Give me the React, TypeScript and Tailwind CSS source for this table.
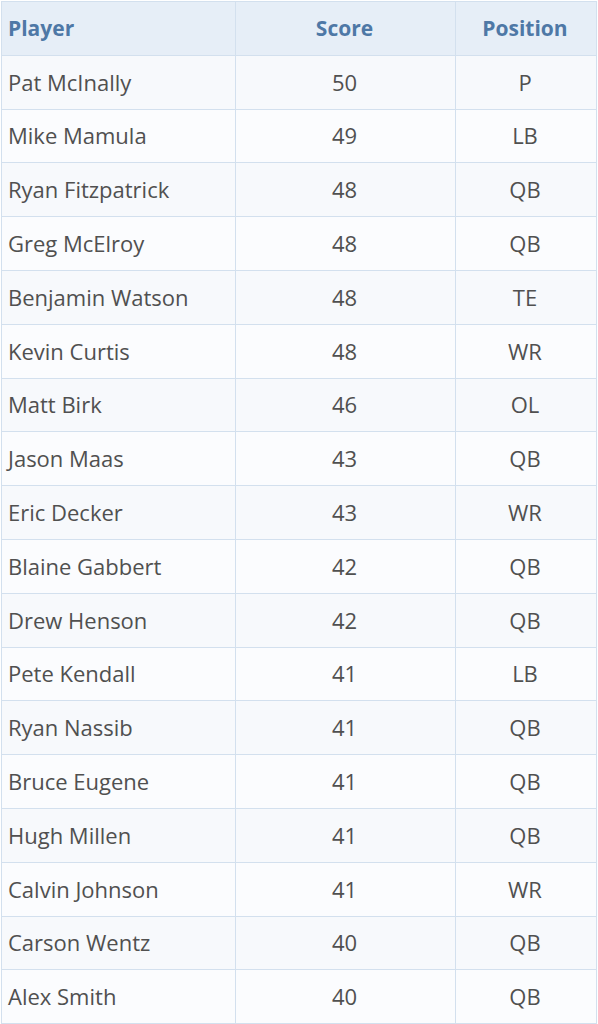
import React from "react";

interface PlayerRow {
    name: string;
    score: number;
    position: string;
}

const players: PlayerRow[] = [
    { name: "Pat McInally", score: 50, position: "P" },
    { name: "Mike Mamula", score: 49, position: "LB" },
    { name: "Ryan Fitzpatrick", score: 48, position: "QB" },
    { name: "Greg McElroy", score: 48, position: "QB" },
    { name: "Benjamin Watson", score: 48, position: "TE" },
    { name: "Kevin Curtis", score: 48, position: "WR" },
    { name: "Matt Birk", score: 46, position: "OL" },
    { name: "Jason Maas", score: 43, position: "QB" },
    { name: "Eric Decker", score: 43, position: "WR" },
    { name: "Blaine Gabbert", score: 42, position: "QB" },
    { name: "Drew Henson", score: 42, position: "QB" },
    { name: "Pete Kendall", score: 41, position: "LB" },
    { name: "Ryan Nassib", score: 41, position: "QB" },
    { name: "Bruce Eugene", score: 41, position: "QB" },
    { name: "Hugh Millen", score: 41, position: "QB" },
    { name: "Calvin Johnson", score: 41, position: "WR" },
    { name: "Carson Wentz", score: 40, position: "QB" },
    { name: "Alex Smith", score: 40, position: "QB" },
];

const cell = "h-[53.8px] border border-[#d3e0ee] pl-[6px] pr-2 align-middle";

const App: React.FC = () => {
    return (
        <div className="w-[598px] bg-white pt-px pl-px font-['Open_Sans',sans-serif]">
            <table className="w-[596px] border-collapse table-fixed">
                <colgroup>
                    <col className="w-[234px]" />
                    <col className="w-[220px]" />
                    <col />
                </colgroup>
                <thead>
                    <tr className="bg-[#e6eef7] text-[#4e78a6] font-semibold text-[21px]">
                        <th className={`${cell} text-left`}>Player</th>
                        <th className={`${cell} text-center`}>Score</th>
                        <th className={`${cell} text-center`}>Position</th>
                    </tr>
                </thead>
                <tbody>
                    {players.map((p, idx) => (
                        <tr
                            key={p.name}
                            className={`text-[#505050] text-[22px] ${idx % 2 === 0 ? "bg-[#f7f9fc]" : "bg-[#fbfcfe]"}`}
                        >
                            <td className={`${cell} text-left`}>{p.name}</td>
                            <td className={`${cell} text-center`}>{p.score}</td>
                            <td className={`${cell} text-center`}>{p.position}</td>
                        </tr>
                    ))}
                </tbody>
            </table>
        </div>
    );
};

export default App;
